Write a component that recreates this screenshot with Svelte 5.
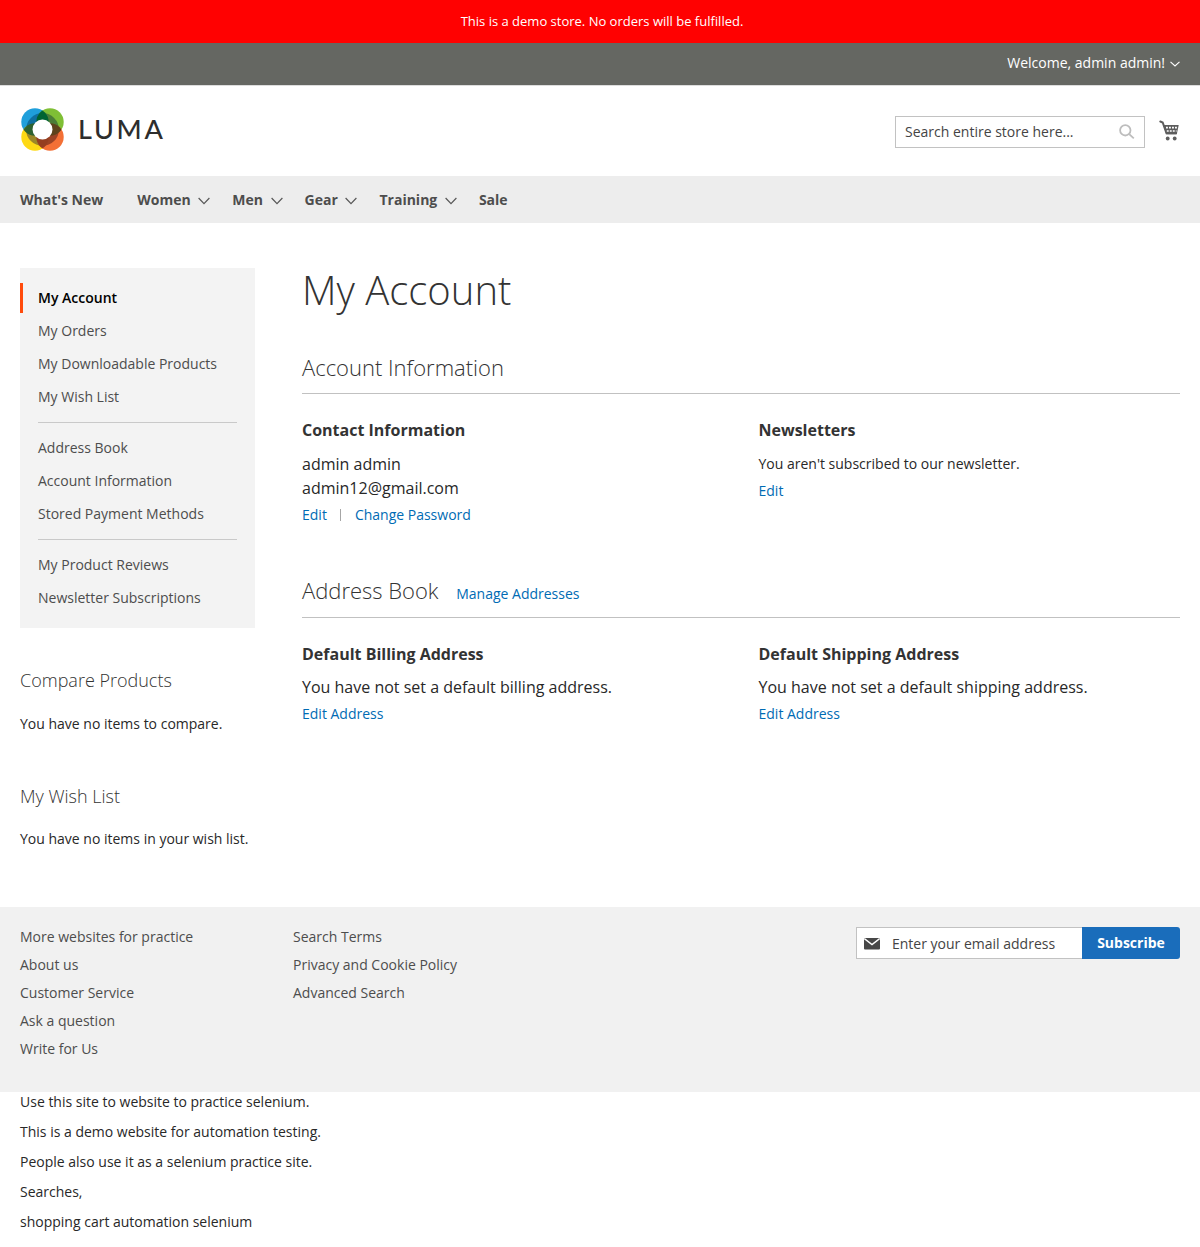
<script>
  const nav = [
    { label: "What's New", first: true },
    { label: 'Women', menu: true },
    { label: 'Men', menu: true },
    { label: 'Gear', menu: true },
    { label: 'Training', menu: true },
    { label: 'Sale' }
  ];
  const accountLinks = [
    ['My Account', 'My Orders', 'My Downloadable Products', 'My Wish List'],
    ['Address Book', 'Account Information', 'Stored Payment Methods'],
    ['My Product Reviews', 'Newsletter Subscriptions']
  ];
  const footerLinks = [
    ['More websites for practice', 'About us', 'Customer Service', 'Ask a question', 'Write for Us'],
    ['Search Terms', 'Privacy and Cookie Policy', 'Advanced Search']
  ];
  const notes = [
    'Use this site to website to practice selenium.',
    'This is a demo website for automation testing.',
    'People also use it as a selenium practice site.',
    'Searches,',
    'shopping cart automation selenium'
  ];
</script>

<div class="notice">This is a demo store. No orders will be fulfilled.</div>
<div class="panel">
  <span>Welcome, admin admin!</span>
  <svg class="caret" width="10" height="6" viewBox="0 0 10 6"><path d="M.5 .8 5 5 9.500 .8" /></svg>
</div>

<header>
  <a class="logo" href="#home" aria-label="Luma">
    <svg width="43" height="43" viewBox="0 0 44 44">
      <circle cx="14.300" cy="14.300" r="14" fill="#1f9fdb" />
      <circle cx="29.700" cy="14.300" r="14" fill="#7fbf35" />
      <circle cx="14.300" cy="29.700" r="14" fill="#fed915" />
      <circle cx="29.700" cy="29.700" r="14" fill="#f37036" />
      <clipPath id="tl"><circle cx="14.300" cy="14.300" r="14" /></clipPath>
      <clipPath id="tr"><circle cx="29.700" cy="14.300" r="14" /></clipPath>
      <clipPath id="bl"><circle cx="14.300" cy="29.700" r="14" /></clipPath>
      <clipPath id="ring"><circle cx="22" cy="22" r="16.800" /></clipPath>
      <g clip-path="url(#ring)">
        <path d="M0 0h22v22H0z" fill="#0f6f9f" />
        <path d="M22 0h22v22H22z" fill="#4b7d37" />
        <path d="M0 22h22v22H0z" fill="#9c8727" />
        <path d="M22 22h22v22H22z" fill="#9b4325" />
      </g>
      <g clip-path="url(#tl)">
        <circle cx="29.700" cy="14.300" r="14" fill="#006432" />
        <circle cx="14.300" cy="29.700" r="14" fill="#2f6230" />
      </g>
      <g clip-path="url(#tr)"><circle cx="29.700" cy="29.700" r="14" fill="#5d431c" /></g>
      <g clip-path="url(#bl)"><circle cx="29.700" cy="29.700" r="14" fill="#943e20" /></g>
      <circle cx="22" cy="22" r="10.200" fill="#fff" />
    </svg>
    <span class="wordmark">LUMA</span>
  </a>
  <div class="tools">
    <div class="search">
      <span>Search entire store here...</span>
      <svg width="16" height="16" viewBox="0 0 16 16"><circle cx="6.300" cy="6.300" r="5.200" /><path d="m10.200 10.200 4.600 4.200" /></svg>
    </div>
    <svg class="cart" width="20" height="21" viewBox="0 0 20 21">
      <path d="M1.300 1.500 3.700 2.500 7.500 13.300H17" fill="none" stroke="#5d5d5d" stroke-width="2" stroke-linecap="round" />
      <path d="M4.200 5H19.700L17.800 14.200H7.300z" fill="#5d5d5d" />
      <path d="M7 7.700H18M7.800 11H17.500" stroke="#fff" stroke-width="1.700" stroke-dasharray="1.900 1.100" />
      <circle cx="8.700" cy="18.500" r="1.900" fill="#5d5d5d" /><circle cx="15.700" cy="18.500" r="1.900" fill="#5d5d5d" />
    </svg>
  </div>
</header>

<nav class="main-nav">
  {#each nav as item}
    <a href="#nav" class:first={item.first}>
      {item.label}
      {#if item.menu}<svg width="12" height="8" viewBox="0 0 12 8"><path d="m.6 1 5.400 5.700L11.400 1" /></svg>{/if}
    </a>
  {/each}
</nav>

<div class="page">
  <aside>
    <div class="account-nav">
      {#each accountLinks as group, g}
        {#if g}<hr />{/if}
        <ul>
          {#each group as link, i}
            <li class:current={g === 0 && i === 0}>{link}</li>
          {/each}
        </ul>
      {/each}
    </div>
    <section class="block">
      <h3>Compare Products</h3>
      <p>You have no items to compare.</p>
    </section>
    <section class="block wish">
      <h3>My Wish List</h3>
      <p>You have no items in your wish list.</p>
    </section>
  </aside>

  <main>
    <h1>My Account</h1>
    <section class="info">
      <h2>Account Information</h2>
      <div class="columns">
        <div>
          <h4>Contact Information</h4>
          <p class="large">admin admin<br />admin12@gmail.com</p>
          <div class="actions"><a href="#edit">Edit</a><i></i><a href="#password">Change Password</a></div>
        </div>
        <div>
          <h4>Newsletters</h4>
          <p class="small">You aren't subscribed to our newsletter.</p>
          <div class="actions"><a href="#edit">Edit</a></div>
        </div>
      </div>
    </section>
    <section class="book">
      <h2>Address Book <a href="#manage">Manage Addresses</a></h2>
      <div class="columns">
        <div>
          <h4>Default Billing Address</h4>
          <p class="large">You have not set a default billing address.</p>
          <div class="actions"><a href="#billing">Edit Address</a></div>
        </div>
        <div>
          <h4>Default Shipping Address</h4>
          <p class="large">You have not set a default shipping address.</p>
          <div class="actions"><a href="#shipping">Edit Address</a></div>
        </div>
      </div>
    </section>
  </main>
</div>

<footer>
  {#each footerLinks as column}
    <ul>
      {#each column as link}<li>{link}</li>{/each}
    </ul>
  {/each}
  <div class="newsletter">
    <div class="email">
      <svg width="16" height="12" viewBox="0 0 16 12"><rect width="16" height="11.500" rx="1" fill="#474747" /><path d="M.3 .6 8 6.500 15.700 .6" fill="none" stroke="#fff" stroke-width="1.500" /></svg>
      <span>Enter your email address</span>
    </div>
    <button>Subscribe</button>
  </div>
</footer>

<div class="notes">
  {#each notes as note}<p>{note}</p>{/each}
</div>

<style>
  :global(body) {
    margin: 0;
    background: #fff;
    color: #333;
    font: 14px/20px 'Open Sans', sans-serif;
  }
  :global(*) { box-sizing: border-box; }
  h1, h2, h3, h4, p, ul { margin: 0; padding: 0; }
  ul { list-style: none; }
  a { color: #006bb4; text-decoration: none; }
  p { color: #282828; }

  .notice {
    height: 43px;
    padding-left: 4px;
    background: #ff0101;
    color: #fff;
    font-size: 13px;
    line-height: 43px;
    text-align: center;
  }
  .panel {
    display: flex;
    justify-content: flex-end;
    height: 42px;
    padding: 10px 20px 0 0;
    background: #656762;
    color: #fff;
  }
  .panel svg { margin: 8px 0 0 5px; }
  .caret path { fill: none; stroke: #fff; stroke-width: 1.100; }

  header {
    display: flex;
    justify-content: space-between;
    height: 92px;
    padding: 22px 21px 0 20px;
    border-top: 1px solid #ddd;
    margin-bottom: -1px;
  }
  .logo { display: flex; height: 44px; padding-left: 1px; }
  .wordmark {
    padding-left: 14px;
    color: #2d2d2d;
    font: 500 27px/41px Lato, sans-serif;
    letter-spacing: 2.700px;
  }
  .tools { display: flex; padding-top: 8px; }
  .search {
    display: flex;
    justify-content: space-between;
    width: 250px;
    height: 32px;
    padding: 5px 9px 0;
    border: 1px solid #c2c2c2;
    color: #444;
  }
  .search svg { margin: 2px 0 0; fill: none; stroke: #bdbdbd; stroke-width: 1.800; }
  .cart { margin: 4px 0 0 14px; }

  .main-nav {
    display: flex;
    height: 47px;
    padding: 0 20px;
    background: #ededed;
    line-height: 47px;
  }
  .main-nav a { margin-right: 22px; color: #4d4d4d; font-weight: 700; white-space: nowrap; }
  .main-nav a.first { margin-right: 34px; }
  .main-nav svg { margin-left: 4px; fill: none; stroke: #575757; stroke-width: 1.200; vertical-align: 0; }

  .page { display: flex; height: 684px; padding: 45px 20px 0; }
  aside { width: 235px; margin-right: 47px; flex: none; }
  .account-nav { height: 360px; padding: 15px 0; background: #f3f3f3; }
  .account-nav li {
    height: 30px;
    margin-bottom: 3px;
    padding-left: 18px;
    color: #4d4d4d;
    line-height: 30px;
  }
  .account-nav li:last-child { margin-bottom: 0; }
  .account-nav .current {
    padding-left: 15px;
    border-left: 3px solid #ff4b0c;
    color: #000;
    font-weight: 600;
  }
  hr { height: 1px; margin: 10px 18px; border: 0; background: #c9c9c9; }
  .block { padding-top: 42px; }
  .block h3 { color: #333; font-size: 18px; font-weight: 300; line-height: 20px; }
  .block p { margin-top: 24px; }
  .wish { padding-top: 52px; }
  .wish p { margin-top: 23px; }

  main { flex: 1; }
  h1 { color: #333; font-size: 40px; font-weight: 300; line-height: 44px; }
  h2 {
    height: 39px;
    border-bottom: 1px solid #c1c1c1;
    color: #333;
    font-size: 22px;
    font-weight: 300;
    line-height: 24px;
  }
  h2 a { margin-left: 12px; font-size: 14px; font-weight: 400; }
  .info { margin-top: 43px; }
  .book { margin-top: 53px; }
  .book h2 { height: 40px; }
  .columns { display: grid; grid-template-columns: 456.500px 1fr; padding-top: 26px; }
  h4 { color: #333; font-size: 16px; font-weight: 700; line-height: 20px; }
  .large { margin-top: 12px; font-size: 16px; line-height: 24px; }
  .book .large { margin-top: 11px; }
  .small { margin-top: 14px; padding-bottom: 2px; }
  .actions { display: flex; align-items: center; padding-top: 5px; }
  .actions i { width: 1px; height: 12px; margin: 0 14px 0 13px; background: #a6a6a6; }

  footer { display: flex; height: 185px; padding: 20px; background: #f1f1f1; }
  footer ul { width: 273px; }
  footer li { margin-bottom: 8px; color: #4d4d4d; }
  .newsletter { display: flex; height: 32px; margin-left: auto; }
  .email {
    display: flex;
    width: 226px;
    padding: 6px 0 0 7px;
    border: 1px solid #c2c2c2;
    border-right: 0;
    background: #fff;
    color: #444;
  }
  .email svg { margin: 4px 12px 0 0; }
  button {
    width: 98px;
    padding: 0;
    border: 0;
    border-radius: 0 3px 3px 0;
    background: #1a6dbb;
    color: #fff;
    font: 700 14px/32px 'Open Sans', sans-serif;
  }
  .notes { padding: 0 20px 15px; }
  .notes p { margin-bottom: 10px; }
</style>
